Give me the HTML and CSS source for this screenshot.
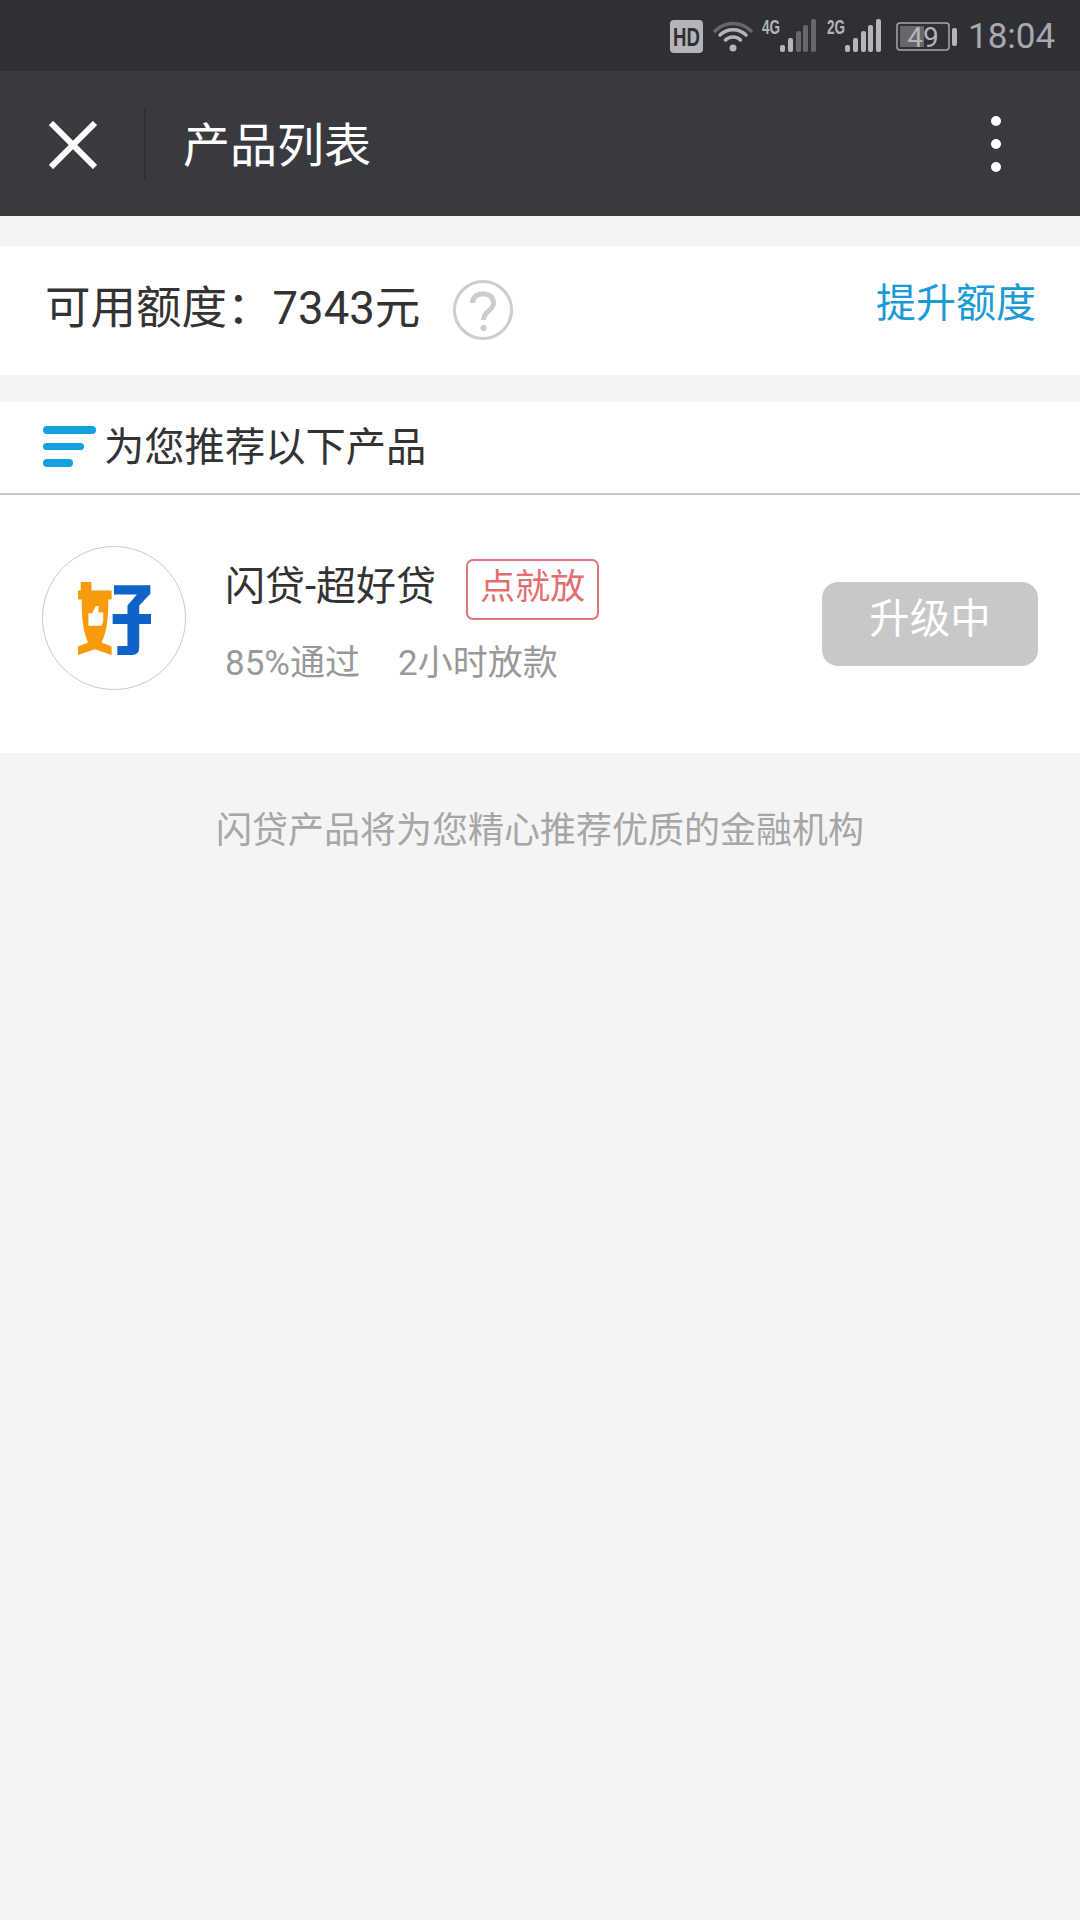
FILE: index.html
```html
<!DOCTYPE html>
<html lang="zh-CN">
<head>
<meta charset="utf-8">
<title>产品列表</title>
<link rel="stylesheet" href="styles.css">
</head>
<body>
<div class="page">
  <div class="status">
    <svg class="st-hd" width="33" height="33" viewBox="0 0 33 33"><rect width="33" height="33" rx="4" fill="#b5b5b7"/><text transform="translate(3 26) scale(.93 1.3)" class="hd-text">HD</text></svg>
    <svg class="st-wifi" width="40" height="32" viewBox="0 0 40 32" fill="none" stroke-linecap="round"><path d="M2 11C12 1 28 1 38 11" stroke="#66676b" stroke-width="3.5"/><path d="M7 15C14 8 26 8 33 15" stroke="#b5b5b7" stroke-width="3.5"/><path d="M12.500 20C16.500 16 23.500 16 27.500 20" stroke="#b5b5b7" stroke-width="3.5"/><circle cx="20" cy="28" r="3.500" fill="#b5b5b7"/></svg>
    <svg class="st-net" width="58" height="44" viewBox="-4 -8 58 44"><text transform="translate(0 15) scale(.9 1.3)" class="net-text">4G</text><g fill="#66676b"><rect x="34" y="12" width="5" height="21" rx="2"/><rect x="41" y="6" width="5" height="27" rx="2"/><rect x="49" y="0" width="5" height="33" rx="2"/></g><g fill="#b5b5b7"><rect x="18" y="26" width="5" height="7" rx="2"/><rect x="26" y="19" width="5" height="14" rx="2"/></g></svg>
    <svg class="st-net2" width="58" height="44" viewBox="-4 -8 58 44"><text transform="translate(0 15) scale(.9 1.3)" class="net-text">2G</text><g fill="#b5b5b7"><rect x="18" y="26" width="5" height="7" rx="2"/><rect x="26" y="19" width="5" height="14" rx="2"/><rect x="34" y="12" width="5" height="21" rx="2"/><rect x="41" y="6" width="5" height="27" rx="2"/><rect x="49" y="0" width="5" height="33" rx="2"/></g></svg>
    <svg class="st-bat" width="62" height="42" viewBox="0 -6 62 42"><rect x="1" y="1" width="52" height="27" rx="3" fill="none" stroke="#a8a8aa" stroke-width="1.500"/><rect x="4" y="4" width="24" height="21" fill="#66676b"/><rect x="56" y="6" width="5" height="18" rx="2" fill="#b5b5b7"/><text x="27" y="25" text-anchor="middle" class="bat-text">49</text></svg>
    <span class="time">18:04</span>
  </div>

  <header class="toolbar">
    <svg class="close" width="48" height="48" viewBox="0 0 48 48" fill="none" stroke="#fff" stroke-width="6"><path d="M2 2L46 46M46 2L2 46"/></svg>
    <span class="divider"></span>
    <h1 class="title">产品列表</h1>
    <span class="more"><i></i><i></i><i></i></span>
  </header>

  <section class="quota">
    <div class="quota-left">
      <span class="quota-text">可用额度：7343元</span>
      <svg class="help" width="60" height="60" viewBox="0 0 60 60" fill="none"><circle cx="30" cy="30" r="28.500" stroke="#cdcdcd" stroke-width="3"/><path d="M19.500 23C19.500 10.500 40.500 10.500 40.500 23C40.500 31 30.500 31 30.500 40" stroke="#cdcdcd" stroke-width="5"/><circle cx="30.500" cy="48" r="3" fill="#cdcdcd"/></svg>
    </div>
    <a class="raise">提升额度</a>
  </section>

  <section class="list">
    <div class="list-head">
      <span class="bars"><i class="b1"></i><i class="b2"></i><i class="b3"></i></span>
      <span class="list-title">为您推荐以下产品</span>
    </div>
    <div class="item">
      <div class="avatar">
        <svg class="logo" width="144" height="144" viewBox="68 48 428 428"><path fill="#f79a0c" d="M183 155H215V180H275V207H265C265 270 260 305 245 335L275 347V372L225 355L175 372V347L205 335C190 300 186 265 186 207H175V180H183Z"/><path fill="#fff" d="M206 248H217L228 226H236V246H250V270L245 285H206Z"/><path fill="#0f62c8" d="M282 165H390V190L357 225V250H392V280H357V350Q357 372 335 372H292V345H322V280H278V250H322V225L350 192H282Z"/></svg>
      </div>
      <div class="info">
        <div class="name-row">
          <span class="name">闪贷-超好贷</span>
          <span class="tag">点就放</span>
        </div>
        <div class="meta"><span>85%通过</span><span>2小时放款</span></div>
      </div>
      <button class="state">升级中</button>
    </div>
  </section>

  <p class="note">闪贷产品将为您精心推荐优质的金融机构</p>
</div>
</body>
</html>
```
FILE: styles.css
```css
* { box-sizing: border-box; }
html, body { margin: 0; padding: 0; }
body {
  width: 1080px;
  height: 1920px;
  background: #f4f4f4;
  font-family: Roboto, "Noto Sans CJK SC", sans-serif;
  overflow: hidden;
}
.page { display: flex; flex-direction: column; height: 1920px; }

.status {
  height: 71px;
  background: #2f3036;
  display: flex;
  align-items: flex-start;
  padding-left: 670px;
}
.status svg { flex: none; display: block; }
.st-hd { margin-top: 20px; }
.st-wifi { margin: 20px 0 0 10px; }
.st-net { margin: 11px 0 0 5px; }
.st-net2 { margin: 11px 0 0 7px; }
.st-bat { margin: 16px 0 0 15px; }
.hd-text { font: 700 20px "Liberation Sans", sans-serif; fill: #2f3036; }
.net-text { font: 700 15px "Liberation Sans", sans-serif; fill: #b5b5b7; }
.bat-text { font: 400 28px Roboto, sans-serif; fill: #b5b5b7; }
.time {
  margin: 15px 0 0 10px;
  font-size: 35px;
  line-height: 44px;
  color: #a9a9ab;
}

.toolbar {
  height: 145px;
  background: #393a3f;
  display: flex;
  align-items: center;
  padding-left: 49px;
}
.close { flex: none; margin-top: 3px; }
.divider {
  width: 2px;
  height: 73px;
  margin-left: 47px;
  background: #2f3036;
}
.title {
  margin: 4px 0 0 37px;
  font-size: 47px;
  font-weight: 400;
  color: #fff;
  line-height: 60px;
}
.more {
  margin-left: auto;
  margin-right: 79px;
  display: flex;
  flex-direction: column;
  gap: 13px;
}
.more i { width: 10px; height: 10px; border-radius: 50%; background: #fff; display: block; }

.quota {
  margin-top: 30px;
  height: 129px;
  background: #fff;
  display: flex;
  justify-content: space-between;
  padding: 0 44px 0 45px;
}
.quota-left { display: flex; align-items: center; }
.quota-text { font-size: 45.500px; color: #333; line-height: 60px; margin-top: -4px; }
.help { margin-left: 33px; margin-top: -2px; flex: none; }
.raise { font-size: 40px; color: #1c9ad6; line-height: 56px; margin-top: 30px; }

.list { margin-top: 27px; background: #fff; }
.list-head {
  height: 93px;
  border-bottom: 2px solid #c8c8c8;
  display: flex;
  align-items: center;
  padding-left: 43px;
}
.bars { display: flex; flex-direction: column; gap: 9px; margin-top: -2px; }
.bars i { display: block; height: 7.500px; border-radius: 4px; background: #13a0de; }
.b1 { width: 53px; }
.b2 { width: 41px; }
.b3 { width: 30px; }
.list-title { margin-left: 8px; font-size: 40.300px; color: #333; line-height: 56px; margin-top: 1px; }

.item {
  height: 258px;
  padding: 51px 42px 0;
  display: flex;
  align-items: flex-start;
}
.avatar {
  width: 144px;
  height: 144px;
  flex: none;
  border-radius: 50%;
  border: 1.500px solid #cbcbcb;
  display: flex;
  align-items: center;
  justify-content: center;
  overflow: hidden;
}
.logo { flex: none; }
.info { margin-left: 39px; flex: 1; }
.name-row { display: flex; align-items: center; margin-top: 13px; height: 62px; }
.name { font-size: 40px; color: #333; line-height: 56px; margin-top: -7px; }
.tag {
  margin-left: 30px;
  width: 133px;
  height: 61px;
  border: 2px solid #df7578;
  border-radius: 7px;
  color: #e26d70;
  font-size: 35px;
  line-height: 54px;
  text-align: center;
  margin-top: -2px;
}
.meta {
  display: flex;
  gap: 38px;
  margin-top: 19px;
  font-size: 35px;
  line-height: 48px;
  color: #999;
}
.state {
  width: 216px;
  height: 84px;
  margin-top: 36px;
  border: 0;
  padding: 0 0 18px;
  border-radius: 16px;
  background: #c8c8c8;
  color: #fff;
  font: 400 40.500px Roboto, "Noto Sans CJK SC", sans-serif;
}

.note {
  margin: 53px 0 0;
  text-align: center;
  font-size: 36px;
  line-height: 50px;
  color: #a6a6a6;
}
```
